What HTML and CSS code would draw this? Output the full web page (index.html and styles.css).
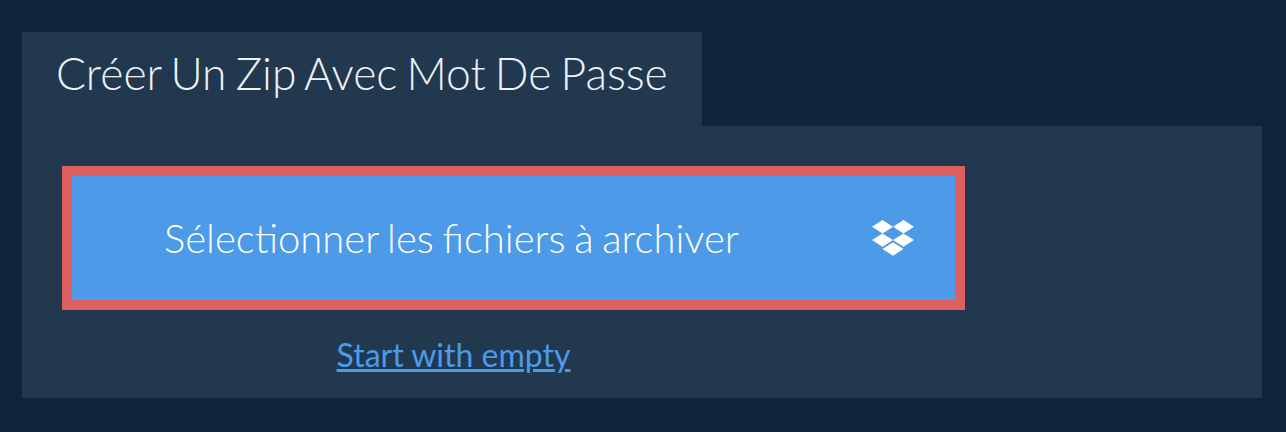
FILE: index.html
```html
<!DOCTYPE html>
<html>
<head>
    <meta name="viewport" content="width=device-width, initial-scale=1.0">
    <link rel="stylesheet" href="styles.css">
</head>
<body>
    <div class="tab">Créer Un Zip Avec Mot De Passe</div>
    <div class="panel">
        <div class="picker-button">
            <span class="picker-label">Sélectionner les fichiers à archiver</span>
            <span class="picker-source">
                <svg viewBox="0 0 42 40" width="42" height="40">
                    <path fill="#fff" d="M10.5 2 0 8.7l10.5 6.7L21 8.7zM31.5 2 21 8.7l10.5 6.7L42 8.7zM0 22.1l10.5 6.7L21 22.1l-10.5-6.7zM31.5 15.4 21 22.1l10.5 6.7L42 22.1zM10.5 31l10.5 6.7L31.5 31 21 24.3z"/>
                </svg>
            </span>
        </div>
        <div class="empty-row">
            <a class="empty-link" href="#">Start with empty</a>
        </div>
    </div>
</body>
</html>
```

FILE: styles.css
```css
body {
    margin: 0;
    padding: 32px 24px 34px 22px;
    background: #10253c;
    font-family: Lato, "Liberation Sans", sans-serif;
    color: #edf2f7;
}
.tab {
    width: 680px;
    height: 94px;
    box-sizing: border-box;
    padding-left: 34px;
    background: #22384f;
    font-size: 44.4px;
    font-weight: 300;
    word-spacing: -2.9px;
    line-height: 81px;
}
.panel {
    height: 272px;
    box-sizing: border-box;
    padding: 40px;
    background: #22384f;
}
.picker-button {
    width: 903px;
    height: 144px;
    box-sizing: border-box;
    border: 10px solid #dd5f5f;
    background: #4c9ae8;
    display: flex;
    align-items: center;
    color: #fff;
    font-size: 40px;
    font-weight: 300;
    word-spacing: -2.2px;
}
.picker-label {
    flex: 1;
    text-align: center;
}
.picker-source {
    width: 124px;
    display: flex;
    justify-content: center;
}
.empty-row {
    width: 783px;
    margin-top: 26px;
    text-align: center;
}
.empty-link {
    color: #4c9ae8;
    font-size: 32px;
    line-height: 38px;
}
```
